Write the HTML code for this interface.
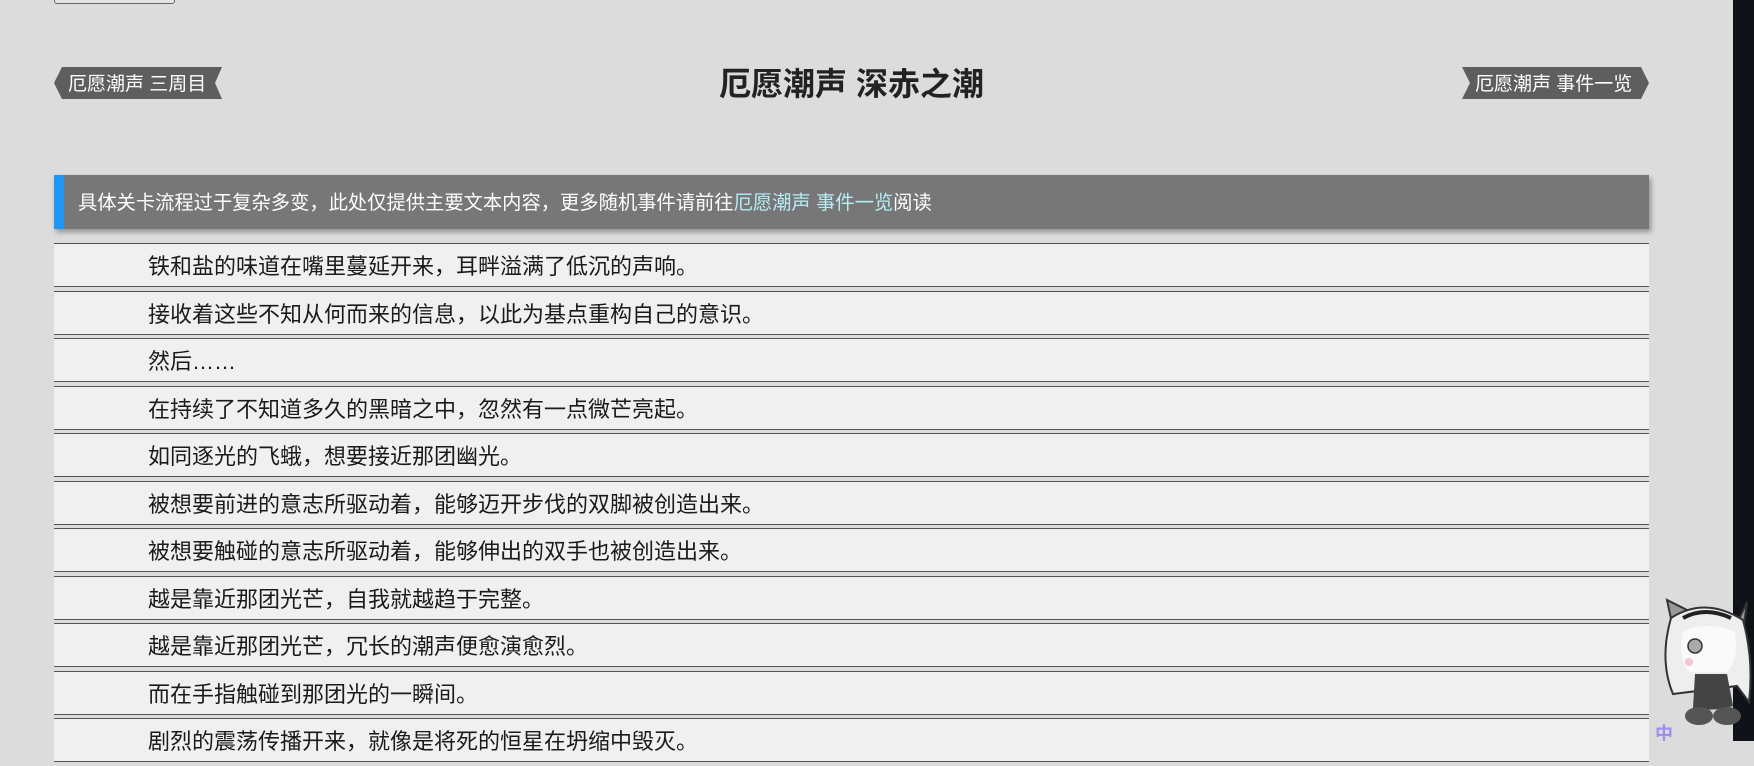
<!DOCTYPE html>
<html><head><meta charset="utf-8"><style>
html,body{margin:0;padding:0}
body{width:1754px;height:741px;overflow:hidden;background:#dcdcdc;position:relative;font-family:"Liberation Sans","Noto Sans CJK SC",sans-serif}
.topbtn{position:absolute;left:54px;top:-4px;width:119px;height:6px;border:1px solid #666;border-radius:3px;background:#e4e4e4}
.nav{position:absolute;top:67px;height:32px;line-height:32px;color:#fff;font-size:19px;white-space:nowrap}
.nav svg{position:absolute;left:0;top:0}
.nav span{position:relative;top:2px}
h1{position:absolute;left:54px;width:1595px;top:64px;margin:0;text-align:center;font-size:32px;line-height:40px;font-weight:bold;color:#222}
.notice{position:absolute;left:54px;top:175px;width:1595px;height:54px;background:#777;box-shadow:2px 3px 5px rgba(0,0,0,.35);color:#fff;font-size:19.3px;line-height:54px}
.notice .bar{position:absolute;left:0;top:0;width:10px;height:54px;background:#2196f3}
.notice .t{position:absolute;left:24px;top:2px;white-space:nowrap}
.notice a{color:#b7ecf7;text-decoration:none}
.rows{position:absolute;left:54px;top:243px;width:1595px}
.row{box-sizing:border-box;height:44px;border-top:1px solid #555;border-bottom:1px solid #555;background:#f0f0f0;margin-bottom:3.5px;font-size:22px;line-height:42px;color:#1a1a1a;padding-left:94px;padding-top:2px;white-space:nowrap}
.dark{position:absolute;left:1733px;top:0;width:21px;height:741px;background:#0f1217}
</style></head><body>
<div class="topbtn"></div>
<div class="nav" style="left:54px;width:168px">
<svg width="168" height="32"><polygon points="8,0 168,0 161,16 168,32 8,32 0,16" fill="#5e5e5e"/></svg>
<span style="left:14px">厄愿潮声 三周目</span></div>
<div class="nav" style="left:1462px;width:187px">
<svg width="187" height="32"><polygon points="0,0 179,0 187,16 179,32 0,32 8,16" fill="#5e5e5e"/></svg>
<span style="left:13px">厄愿潮声 事件一览</span></div>
<h1>厄愿潮声 深赤之潮</h1>
<div class="notice"><div class="bar"></div><div class="t">具体关卡流程过于复杂多变，此处仅提供主要文本内容，更多随机事件请前往<a>厄愿潮声 事件一览</a>阅读</div></div>
<div class="rows">
<div class="row">铁和盐的味道在嘴里蔓延开来，耳畔溢满了低沉的声响。</div>
<div class="row">接收着这些不知从何而来的信息，以此为基点重构自己的意识。</div>
<div class="row">然后……</div>
<div class="row">在持续了不知道多久的黑暗之中，忽然有一点微芒亮起。</div>
<div class="row">如同逐光的飞蛾，想要接近那团幽光。</div>
<div class="row">被想要前进的意志所驱动着，能够迈开步伐的双脚被创造出来。</div>
<div class="row">被想要触碰的意志所驱动着，能够伸出的双手也被创造出来。</div>
<div class="row">越是靠近那团光芒，自我就越趋于完整。</div>
<div class="row">越是靠近那团光芒，冗长的潮声便愈演愈烈。</div>
<div class="row">而在手指触碰到那团光的一瞬间。</div>
<div class="row">剧烈的震荡传播开来，就像是将死的恒星在坍缩中毁灭。</div>
</div>
<div class="dark"></div>
<svg style="position:absolute;left:1655px;top:590px" width="99" height="151" viewBox="0 0 99 151">
<path d="M18 38 L12 10 L32 20 Z" fill="#999" stroke="#333" stroke-width="2"/>
<path d="M80 38 L92 12 L88 42 Z" fill="#999" stroke="#333" stroke-width="2"/>
<path d="M16 28 Q50 6 88 30 Q99 70 94 112 L82 96 L18 104 Q4 70 16 28Z" fill="#eee" stroke="#333" stroke-width="2"/>
<path d="M28 42 Q50 30 80 42 Q84 70 72 82 L34 82 Q22 66 28 42Z" fill="#fafafa"/>
<circle cx="40" cy="56" r="7" fill="#aaa" stroke="#333" stroke-width="1.5"/>
<circle cx="34" cy="72" r="4" fill="#f5c6d0"/>
<path d="M28 28 Q50 16 76 28" stroke="#222" stroke-width="4" fill="none"/>
<path d="M40 84 L72 84 L78 116 Q60 122 38 118Z" fill="#444"/>
<ellipse cx="44" cy="126" rx="14" ry="9" fill="#555"/>
<ellipse cx="72" cy="126" rx="14" ry="9" fill="#555"/>
<text x="0" y="150" font-size="18" fill="#9b8ff0" font-weight="bold" font-family="Noto Sans CJK SC">中</text>
</svg>
</body></html>
